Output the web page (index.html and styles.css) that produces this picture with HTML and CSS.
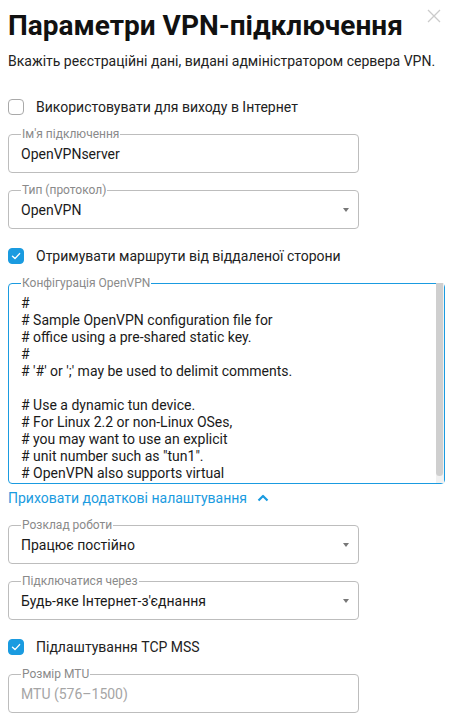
FILE: index.html
```html
<!DOCTYPE html>
<html>
<head>
	<title>Параметри VPN-підключення</title>
	<link rel="stylesheet" href="styles.css">
</head>
<body>

<div class="dialog">
	<div class="dialog-header">
		<h1>Параметри VPN-підключення</h1>
		<svg class="close" viewBox="0 0 14 14" width="14" height="14"><path d="M1 1 L13 13 M13 1 L1 13" stroke="#cbcbcb" stroke-width="1.3"/></svg>
	</div>
	<p class="hint">Вкажіть реєстраційні дані, видані адміністратором сервера VPN.</p>

	<label class="check check-first">
		<span class="box"></span>
		<span>Використовувати для виходу в Інтернет</span>
	</label>

	<fieldset class="field field-name">
		<legend>Ім'я підключення</legend>
		<div class="field-row"><span class="value">OpenVPNserver</span></div>
	</fieldset>

	<fieldset class="field select">
		<legend>Тип (протокол)</legend>
		<div class="field-row"><span class="value">OpenVPN</span><span class="arrow"></span></div>
	</fieldset>

	<label class="check">
		<span class="box checked"><svg viewBox="0 0 16 16" width="16" height="16"><path d="M4.5 8.2 L7 10.6 L11.6 5.6" fill="none" stroke="#fff" stroke-width="1.4" stroke-linecap="round" stroke-linejoin="round"/></svg></span>
		<span>Отримувати маршрути від віддаленої сторони</span>
	</label>

	<fieldset class="field config">
		<legend>Конфігурація OpenVPN</legend>
		<div class="config-row">
			<div class="config-text">#
# Sample OpenVPN configuration file for
# office using a pre-shared static key.
#
# '#' or ';' may be used to delimit comments.

# Use a dynamic tun device.
# For Linux 2.2 or non-Linux OSes,
# you may want to use an explicit
# unit number such as "tun1".
# OpenVPN also supports virtual</div>
			<div class="scrollbar"><div class="thumb"></div></div>
		</div>
	</fieldset>

	<a class="toggle" href="#">Приховати додаткові налаштування
		<svg viewBox="0 0 12 8" width="12" height="8"><path d="M1.5 6.5 L6 2 L10.5 6.5" fill="none" stroke="#1a9be0" stroke-width="2.2" stroke-linejoin="round"/></svg>
	</a>

	<fieldset class="field select">
		<legend>Розклад роботи</legend>
		<div class="field-row"><span class="value">Працює постійно</span><span class="arrow"></span></div>
	</fieldset>

	<fieldset class="field select">
		<legend>Підключатися через</legend>
		<div class="field-row"><span class="value">Будь-яке Інтернет-з'єднання</span><span class="arrow"></span></div>
	</fieldset>

	<label class="check">
		<span class="box checked"><svg viewBox="0 0 16 16" width="16" height="16"><path d="M4.5 8.2 L7 10.6 L11.6 5.6" fill="none" stroke="#fff" stroke-width="1.4" stroke-linecap="round" stroke-linejoin="round"/></svg></span>
		<span>Підлаштування TCP MSS</span>
	</label>

	<fieldset class="field">
		<legend>Розмір MTU</legend>
		<div class="field-row"><span class="value placeholder">MTU (576–1500)</span></div>
	</fieldset>
</div>

</body>
</html>
```

FILE: styles.css
```css
body {
	margin: 0;
	background: #fff;
	font-family: Roboto, "Noto Sans", sans-serif;
	color: #1a1a1a;
}
.dialog {
	padding: 8px;
	width: 436px;
}
.dialog-header {
	display: flex;
	justify-content: space-between;
	align-items: flex-start;
}
.dialog-header h1 {
	margin: 0;
	font-size: 28px;
	line-height: 36px;
	font-weight: 700;
	color: #111;
}
.close {
	flex: none;
	margin-top: 1px;
	margin-right: 3px;
}
.hint {
	margin: 7px 0 0;
	font-size: 14px;
	line-height: 20px;
	color: #222;
}
.check {
	display: flex;
	align-items: center;
	gap: 12px;
	font-size: 14px;
	line-height: 20px;
	color: #222;
	margin-top: 17px;
}
.check-first {
	margin-top: 26px;
}
.box {
	width: 14px;
	height: 14px;
	border: 1px solid #a9a9a9;
	border-radius: 4px;
	display: flex;
	align-items: center;
	justify-content: center;
	flex: none;
}
.box.checked {
	background: #1a9be0;
	border-color: #1a9be0;
}
.box svg {
	flex: none;
}
.field {
	margin: 10px 0 0;
	padding: 0 12px 5px 12px;
	width: 325px;
	border: 1px solid #bdbdbd;
	border-radius: 4px;
}
.field legend {
	padding: 0 1px;
	font-size: 12px;
	line-height: 14px;
	color: #8a8a8a;
}
.field-row {
	display: flex;
	align-items: center;
	height: 26px;
}
.value {
	flex: 1;
	font-size: 14px;
	color: #1a1a1a;
}
.value.placeholder {
	color: #a5a5a5;
}
.select {
	padding-right: 9px;
	width: 328px;
}
.arrow {
	width: 0;
	height: 0;
	border-left: 3.5px solid transparent;
	border-right: 3.5px solid transparent;
	border-top: 4px solid #777;
}
.check + .field {
	margin-top: 10px;
}
.config {
	width: 423px;
	padding: 0 0 0 12px;
	border-color: #1a9be0;
	margin-top: 11px;
}
.config-row {
	display: flex;
	height: 193px;
}
.config-text {
	flex: 1;
	overflow: hidden;
	white-space: pre;
	font-size: 14px;
	line-height: 17px;
	padding-top: 5px;
	color: #1a1a1a;
}
.scrollbar {
	width: 8px;
	margin-top: -7px;
	background: #f1f1f1;
	display: flex;
	flex-direction: column;
}
.thumb {
	height: 193px;
	width: 7px;
	background: #cfcfcf;
	border-radius: 0 0 4px 4px;
}
.toggle {
	display: flex;
	align-items: center;
	gap: 10px;
	margin-top: 4px;
	font-size: 14px;
	line-height: 20px;
	color: #1a9be0;
	text-decoration: none;
}
.toggle + .field {
	margin-top: 10px;
}
```
